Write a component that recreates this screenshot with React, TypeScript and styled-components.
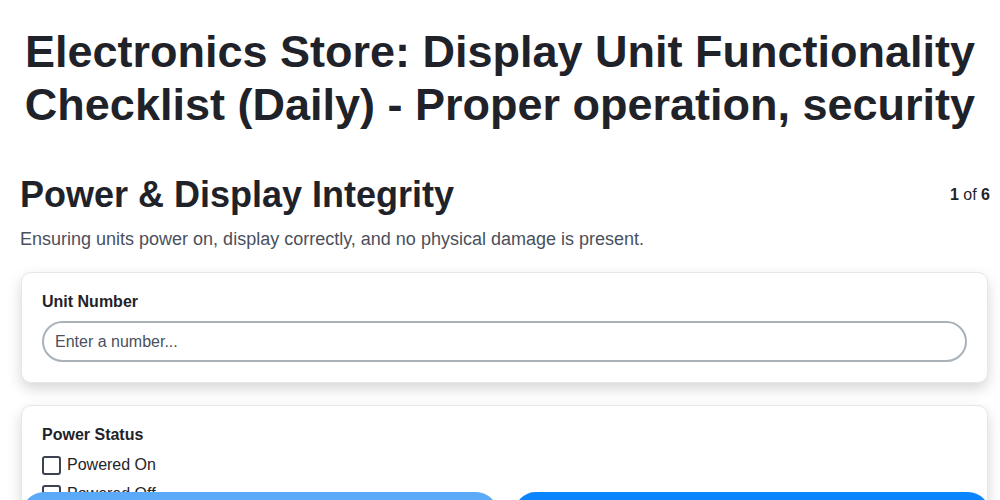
import React, { useState } from "react";
import styled, { createGlobalStyle } from "styled-components";

const GlobalStyle = createGlobalStyle`
    * {
        box-sizing: border-box;
    }
    body {
        margin: 0;
        background: #fff;
        font-family: "Liberation Sans", Arial, sans-serif;
        color: #1f2329;
    }
`;

const Page = styled.div`
    padding: 20px 10px 80px 20px;
`;

const Title = styled.h1`
    margin: 5px 10px 43px 0;
    text-align: center;
    font-size: 45px;
    line-height: 53px;
    font-weight: 700;
    color: #1f2329;
`;

const SectionHeader = styled.div`
    display: flex;
    justify-content: space-between;
    align-items: flex-start;
`;

const SectionTitle = styled.h2`
    margin: 0;
    font-size: 36px;
    line-height: 42px;
    font-weight: 700;
`;

const StepCount = styled.div`
    font-size: 16px;
    padding-top: 12px;
    color: #1f2329;

    b {
        font-weight: 700;
    }
`;

const Description = styled.p`
    margin: 13px 0 22px;
    font-size: 18px;
    color: #4a505c;
`;

const Card = styled.div`
    background: #fff;
    border: 1px solid #e6e6ec;
    border-radius: 10px;
    box-shadow: 0 6px 14px rgba(0, 0, 0, 0.16);
    padding: 20px;
    margin: 0 2px 22px 1px;
`;

const Label = styled.div`
    font-size: 16px;
    font-weight: 700;
    margin-bottom: 10px;
`;

const Input = styled.input`
    display: block;
    width: 100%;
    height: 41px;
    border: 2px solid #a9b1b9;
    border-radius: 21px;
    padding: 0 11px;
    font-family: "Liberation Sans", Arial, sans-serif;
    font-size: 16px;
    color: #1f2329;
    outline: none;

    &::placeholder {
        color: #4a505c;
    }
`;

const Option = styled.label`
    display: flex;
    align-items: center;
    gap: 6px;
    font-size: 16px;
    height: 22px;
    margin-bottom: 7px;
    cursor: pointer;
`;

const Box = styled.span<{ checked: boolean }>`
    width: 19px;
    height: 19px;
    border: 2px solid #3d4250;
    border-radius: 3px;
    background: ${(p) => (p.checked ? "#0a84ff" : "#fff")};
`;

const Footer = styled.div`
    position: fixed;
    left: 22px;
    right: 10px;
    bottom: -40px;
    display: grid;
    grid-template-columns: 1fr 1fr;
    gap: 16px;
`;

const NavButton = styled.button<{ primary?: boolean }>`
    height: 48px;
    border: none;
    border-radius: 22px;
    background: ${(p) => (p.primary ? "#0a84ff" : "#5aaaf9")};
    color: #fff;
    font-family: "Liberation Sans", Arial, sans-serif;
    font-size: 16px;
    font-weight: 700;
`;

const powerOptions = ["Powered On", "Powered Off"];

const App = () => {
    const [checked, setChecked] = useState<string[]>([]);

    const toggle = (o: string) => {
        setChecked((prev) => (prev.includes(o) ? prev.filter((x) => x !== o) : [...prev, o]));
    };

    return (
        <Page>
            <GlobalStyle />
            <Title>Electronics Store: Display Unit Functionality Checklist (Daily) - Proper operation, security</Title>
            <SectionHeader>
                <SectionTitle>Power &amp; Display Integrity</SectionTitle>
                <StepCount>
                    <b>1</b> of <b>6</b>
                </StepCount>
            </SectionHeader>
            <Description>Ensuring units power on, display correctly, and no physical damage is present.</Description>
            <Card>
                <Label>Unit Number</Label>
                <Input type="text" placeholder="Enter a number..." />
            </Card>
            <Card>
                <Label>Power Status</Label>
                {powerOptions.map((o) => (
                    <Option key={o} onClick={() => toggle(o)}>
                        <Box checked={checked.includes(o)} />
                        {o}
                    </Option>
                ))}
            </Card>
            <Footer>
                <NavButton>Previous</NavButton>
                <NavButton primary>Next</NavButton>
            </Footer>
        </Page>
    );
};

export default App;
